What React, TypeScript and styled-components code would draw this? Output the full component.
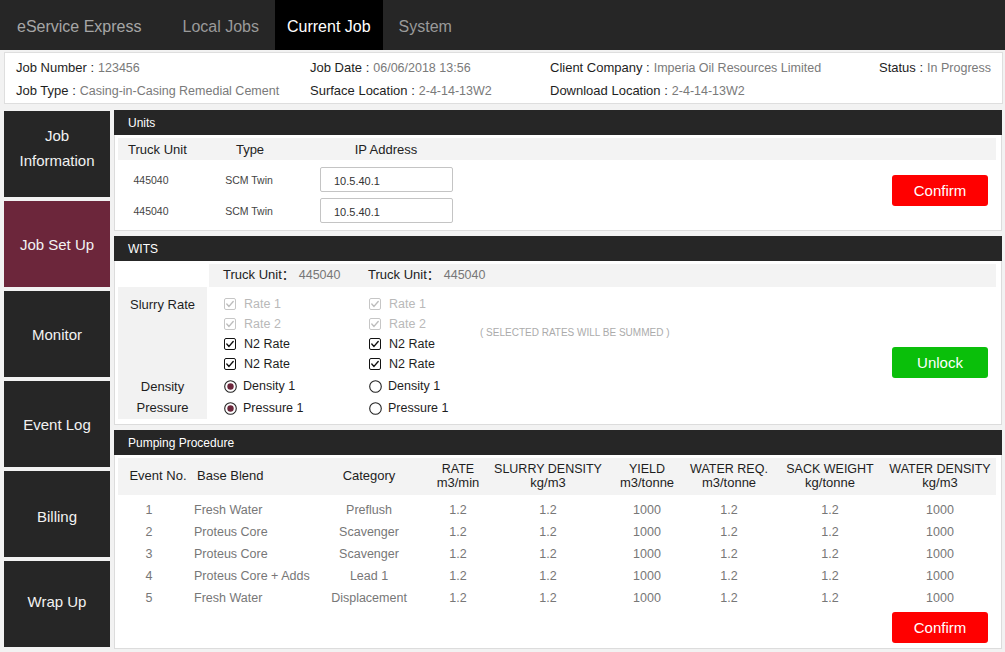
import React from "react";
import styled, { createGlobalStyle } from "styled-components";

const GlobalStyle = createGlobalStyle`
  html, body { margin: 0; padding: 0; background: #f2f2f2; }
  body { font-family: "Liberation Sans", Arial, Helvetica, sans-serif; color: #222; }
  * { box-sizing: border-box; }
`;

const Page = styled.div`
  width: 1005px;
  height: 652px;
  overflow: hidden;
  background: #f2f2f2;
`;

/* ---------- Top bar ---------- */
const TopBar = styled.header`
  height: 50px;
  background: #262626;
  display: flex;
  align-items: stretch;
  padding-left: 17px;
`;
const Brand = styled.div`
  color: #a6a6a6;
  font-size: 16px;
  display: flex;
  align-items: center;
  padding-top: 4px;
  margin-right: 29px;
`;
const NavTabs = styled.nav`
  display: flex;
  gap: 4px;
`;
const NavTab = styled.div<{ $active?: boolean }>`
  display: flex;
  align-items: center;
  padding: 4px 12px 0;
  font-size: 16px;
  color: ${(p) => (p.$active ? "#fff" : "#9a9a9a")};
  background: ${(p) => (p.$active ? "#000" : "transparent")};
`;

/* ---------- Info bar ---------- */
const InfoBar = styled.section`
  margin: 2px 2px 0 4px;
  height: 52px;
  background: #fff;
  border: 1px solid #dedede;
  display: grid;
  grid-template-columns: 294px 240px 329px 1fr;
  grid-template-rows: 23px 23px;
  padding: 3px 0 0 11px;
  font-size: 13px;
`;
const InfoItem = styled.div`
  display: flex;
  align-items: center;
  white-space: nowrap;
`;
const InfoLabel = styled.span`
  color: #1e1e1e;
  margin-right: 4px;
`;
const InfoValue = styled.span`
  color: #7a7a7a;
  font-size: 12.5px;
`;

/* ---------- Main ---------- */
const Main = styled.div`
  display: flex;
  gap: 4px;
  padding: 6px 3px 0 4px;
`;
const Sidebar = styled.aside`
  width: 106px;
  display: flex;
  flex-direction: column;
  gap: 4px;
  padding-top: 1px;
`;
const SideItem = styled.div<{ $active?: boolean; $shift?: number }>`
  height: 86px;
  background: ${(p) => (p.$active ? "#6c263b" : "#262626")};
  color: #f2f2f2;
  font-size: 15px;
  line-height: 25px;
  display: flex;
  align-items: center;
  justify-content: center;
  text-align: center;
  padding-top: ${(p) => Math.max(0, (p.$shift ?? 0) * 2)}px;
  padding-bottom: ${(p) => Math.max(0, -(p.$shift ?? 0) * 2)}px;
`;
const Content = styled.div`
  flex: 1;
  display: flex;
  flex-direction: column;
  gap: 5px;
`;

const Panel = styled.section``;
const PanelHeader = styled.div`
  height: 25px;
  background: #262626;
  color: #fff;
  font-size: 12px;
  display: flex;
  align-items: center;
  padding-left: 14px;
`;
const PanelBody = styled.div<{ $pb?: number }>`
  background: #fff;
  border: 1px solid #dcdcdc;
  border-top: none;
  padding: 3px 5px ${(p) => p.$pb ?? 4}px 3px;
`;

/* ---------- Units ---------- */
const UnitsHead = styled.div`
  display: grid;
  grid-template-columns: 72px 120px 152px 1fr;
  height: 22px;
  background: #f3f3f3;
  font-size: 13px;
  align-items: center;
  text-align: center;
`;
const UnitsHeadFirst = styled.div`
  text-align: left;
  padding-left: 10px;
  white-space: nowrap;
`;
const UnitsContent = styled.div`
  display: flex;
  justify-content: space-between;
  padding-top: 4px;
`;
const UnitRow = styled.div`
  display: grid;
  grid-template-columns: 66px 130px 138px;
  height: 31px;
  align-items: center;
  text-align: center;
  font-size: 10.5px;
  color: #444;
`;
const IpInput = styled.input`
  width: 133px;
  height: 25px;
  border: 1px solid #c4c4c4;
  border-radius: 2px;
  padding: 2px 0 0 13px;
  font-family: inherit;
  font-size: 11px;
  color: #333;
  justify-self: start;
  outline: none;
  margin-left: 6px;
`;
const ActionButton = styled.button<{ $color: string; $top?: number }>`
  width: 96px;
  height: 31px;
  margin: ${(p) => p.$top ?? 0}px 8px 0 0;
  border: none;
  border-radius: 3px;
  background: ${(p) => p.$color};
  color: #fff;
  font-family: inherit;
  font-size: 15px;
  padding: 0;
  flex-shrink: 0;
`;

/* ---------- WITS ---------- */
const WitsTop = styled.div`
  display: flex;
`;
const WitsSpacer = styled.div`
  width: 91px;
`;
const TruckHead = styled.div`
  flex: 1;
  height: 23px;
  background: #f3f3f3;
  display: flex;
  align-items: center;
`;
const TruckCell = styled.div`
  width: 145px;
  padding-left: 14px;
  font-size: 13px;
  line-height: 14px;
  padding-bottom: 2px;
  white-space: nowrap;
  font-family: "Liberation Sans", "Noto Sans CJK SC", sans-serif;
`;
const TruckValue = styled.span`
  color: #777;
  font-size: 12.5px;
  margin-left: 4px;
`;
const WitsMain = styled.div`
  display: flex;
`;
const LabelCol = styled.div`
  width: 89px;
  margin-right: 2px;
  background: #f2f2f2;
  padding-top: 7px;
  display: flex;
  flex-direction: column;
`;
const SideLabel = styled.div<{ $mt?: number }>`
  height: 20px;
  margin-top: ${(p) => p.$mt ?? 0}px;
  display: flex;
  align-items: center;
  justify-content: center;
  font-size: 13px;
  color: #1e1e1e;
`;
const OptionsArea = styled.div`
  flex: 1;
  display: flex;
  align-items: flex-start;
  padding-top: 7px;
`;
const OptionCol = styled.div<{ $w: number }>`
  width: ${(p) => p.$w}px;
  padding-left: 15px;
  display: flex;
  flex-direction: column;
`;
const Option = styled.div<{ $disabled?: boolean; $h?: number; $gap?: number }>`
  height: ${(p) => p.$h ?? 20}px;
  display: flex;
  align-items: center;
  gap: ${(p) => p.$gap ?? 8}px;
  font-size: 12.5px;
  color: ${(p) => (p.$disabled ? "#b9b9b9" : "#1e1e1e")};
  white-space: nowrap;
`;
const NoteCol = styled.div`
  flex: 1;
  padding-top: 33px;
  font-size: 10px;
  line-height: 12px;
  color: #ababab;
  white-space: nowrap;
`;

/* ---------- Pumping ---------- */
const cols = "72px 116px 126px 52px 128px 70px 94px 108px 112px";
const PumpHead = styled.div`
  display: grid;
  grid-template-columns: ${cols};
  height: 37px;
  background: #f3f3f3;
  align-items: center;
  text-align: center;
  font-size: 13px;
  color: #1e1e1e;
  padding-bottom: 2px;
`;
const HeadCell = styled.div<{ $left?: number }>`
  text-align: ${(p) => (p.$left !== undefined ? "left" : "center")};
  padding-left: ${(p) => p.$left ?? 0}px;
  white-space: nowrap;
`;
const HeadTop = styled.div`
  font-size: 12.5px;
  line-height: 14px;
`;
const HeadBottom = styled.div`
  font-size: 13px;
  line-height: 14px;
`;
const PumpRows = styled.div`
  padding-top: 4px;
`;
const PumpRow = styled.div`
  display: grid;
  grid-template-columns: ${cols};
  height: 22px;
  align-items: center;
  font-size: 12.5px;
  color: #777;
`;
const DataCell = styled.div<{ $left?: number }>`
  text-align: ${(p) => (p.$left !== undefined ? "left" : "center")};
  padding-left: ${(p) => p.$left ?? 0}px;
  white-space: nowrap;
`;
const PumpFooter = styled.div`
  display: flex;
  justify-content: flex-end;
  padding-top: 3px;
`;

/* ---------- Icons ---------- */
const CheckBox = ({ disabled }: { disabled?: boolean }) => (
  <svg width="12" height="12" viewBox="0 0 12 12">
    <rect x="0.5" y="0.5" width="11" height="11" rx="1.5" fill="#fff" stroke={disabled ? "#c6c6c6" : "#111"} />
    <path
      d="M2.8 6.1 L5 8.4 L9.2 3.5"
      fill="none"
      stroke={disabled ? "#bdbdbd" : "#111"}
      strokeWidth="1.4"
      strokeLinecap="round"
      strokeLinejoin="round"
    />
  </svg>
);

const Radio = ({ checked }: { checked?: boolean }) => (
  <svg width="13" height="13" viewBox="0 0 13 13">
    <circle cx="6.5" cy="6.5" r="5.8" fill="#fff" stroke="#222" strokeWidth="1.1" />
    {checked && <circle cx="6.5" cy="6.5" r="3.2" fill="#6c263b" />}
  </svg>
);

const pumpData = [
  ["1", "Fresh Water", "Preflush"],
  ["2", "Proteus Core", "Scavenger"],
  ["3", "Proteus Core", "Scavenger"],
  ["4", "Proteus Core + Adds", "Lead 1"],
  ["5", "Fresh Water", "Displacement"],
];

const sideItems: { label: string; shift: number }[] = [
  { label: "Job\nInformation", shift: -6 },
  { label: "Job Set Up", shift: 0 },
  { label: "Monitor", shift: 0 },
  { label: "Event Log", shift: 0 },
  { label: "Billing", shift: 2 },
  { label: "Wrap Up", shift: -3 },
];

const WitsColumn = ({ w, radiosChecked }: { w: number; radiosChecked: boolean }) => (
  <OptionCol $w={w}>
    <Option $disabled>
      <CheckBox disabled />
      Rate 1
    </Option>
    <Option $disabled>
      <CheckBox disabled />
      Rate 2
    </Option>
    <Option>
      <CheckBox />
      N2 Rate
    </Option>
    <Option>
      <CheckBox />
      N2 Rate
    </Option>
    <Option $h={22} $gap={6} style={{ marginTop: 1 }}>
      <Radio checked={radiosChecked} />
      Density 1
    </Option>
    <Option $h={22} $gap={6}>
      <Radio checked={radiosChecked} />
      Pressure 1
    </Option>
  </OptionCol>
);

export default function App() {
  return (
    <Page>
      <GlobalStyle />
      <TopBar>
        <Brand>eService Express</Brand>
        <NavTabs>
          <NavTab>Local Jobs</NavTab>
          <NavTab $active>Current Job</NavTab>
          <NavTab>System</NavTab>
        </NavTabs>
      </TopBar>

      <InfoBar>
        <InfoItem>
          <InfoLabel>Job Number :</InfoLabel>
          <InfoValue>123456</InfoValue>
        </InfoItem>
        <InfoItem>
          <InfoLabel>Job Date :</InfoLabel>
          <InfoValue>06/06/2018 13:56</InfoValue>
        </InfoItem>
        <InfoItem>
          <InfoLabel>Client Company :</InfoLabel>
          <InfoValue>Imperia Oil Resources Limited</InfoValue>
        </InfoItem>
        <InfoItem>
          <InfoLabel>Status :</InfoLabel>
          <InfoValue>In Progress</InfoValue>
        </InfoItem>
        <InfoItem>
          <InfoLabel>Job Type :</InfoLabel>
          <InfoValue>Casing-in-Casing Remedial Cement</InfoValue>
        </InfoItem>
        <InfoItem>
          <InfoLabel>Surface Location :</InfoLabel>
          <InfoValue>2-4-14-13W2</InfoValue>
        </InfoItem>
        <InfoItem>
          <InfoLabel>Download Location :</InfoLabel>
          <InfoValue>2-4-14-13W2</InfoValue>
        </InfoItem>
        <InfoItem />
      </InfoBar>

      <Main>
        <Sidebar>
          {sideItems.map((s, i) => (
            <SideItem key={s.label} $active={i === 1} $shift={s.shift}>
              <div>
                {s.label.split("\n").map((line) => (
                  <div key={line}>{line}</div>
                ))}
              </div>
            </SideItem>
          ))}
        </Sidebar>

        <Content>
          <Panel>
            <PanelHeader>Units</PanelHeader>
            <PanelBody>
              <UnitsHead>
                <UnitsHeadFirst>Truck Unit</UnitsHeadFirst>
                <div>Type</div>
                <div>IP Address</div>
                <div />
              </UnitsHead>
              <UnitsContent>
                <div>
                  {[0, 1].map((i) => (
                    <UnitRow key={i}>
                      <div>445040</div>
                      <div>SCM Twin</div>
                      <IpInput readOnly value="10.5.40.1" />
                    </UnitRow>
                  ))}
                </div>
                <ActionButton $color="#ff0000" $top={11}>
                  Confirm
                </ActionButton>
              </UnitsContent>
            </PanelBody>
          </Panel>

          <Panel>
            <PanelHeader>WITS</PanelHeader>
            <PanelBody $pb={5}>
              <WitsTop>
                <WitsSpacer />
                <TruckHead>
                  <TruckCell>
                    Truck Unit：<TruckValue>445040</TruckValue>
                  </TruckCell>
                  <TruckCell>
                    Truck Unit：<TruckValue>445040</TruckValue>
                  </TruckCell>
                </TruckHead>
              </WitsTop>
              <WitsMain>
                <LabelCol>
                  <SideLabel>Slurry Rate</SideLabel>
                  <SideLabel $mt={62}>Density</SideLabel>
                  <SideLabel $mt={1}>Pressure</SideLabel>
                </LabelCol>
                <OptionsArea>
                  <WitsColumn w={145} radiosChecked />
                  <WitsColumn w={126} radiosChecked={false} />
                  <NoteCol>( SELECTED RATES WILL BE SUMMED )</NoteCol>
                  <ActionButton $color="#0abf0a" $top={53}>
                    Unlock
                  </ActionButton>
                </OptionsArea>
              </WitsMain>
            </PanelBody>
          </Panel>

          <Panel>
            <PanelHeader>Pumping Procedure</PanelHeader>
            <PanelBody $pb={5}>
              <PumpHead>
                <HeadCell style={{ paddingLeft: 8 }}>Event No.</HeadCell>
                <HeadCell $left={7}>Base Blend</HeadCell>
                <HeadCell>Category</HeadCell>
                <HeadCell>
                  <HeadTop>RATE</HeadTop>
                  <HeadBottom>m3/min</HeadBottom>
                </HeadCell>
                <HeadCell>
                  <HeadTop>SLURRY DENSITY</HeadTop>
                  <HeadBottom>kg/m3</HeadBottom>
                </HeadCell>
                <HeadCell>
                  <HeadTop>YIELD</HeadTop>
                  <HeadBottom>m3/tonne</HeadBottom>
                </HeadCell>
                <HeadCell>
                  <HeadTop>WATER REQ.</HeadTop>
                  <HeadBottom>m3/tonne</HeadBottom>
                </HeadCell>
                <HeadCell>
                  <HeadTop>SACK WEIGHT</HeadTop>
                  <HeadBottom>kg/tonne</HeadBottom>
                </HeadCell>
                <HeadCell>
                  <HeadTop>WATER DENSITY</HeadTop>
                  <HeadBottom>kg/m3</HeadBottom>
                </HeadCell>
              </PumpHead>
              <PumpRows>
                {pumpData.map(([n, blend, cat]) => (
                  <PumpRow key={n}>
                    <DataCell style={{ paddingRight: 10 }}>{n}</DataCell>
                    <DataCell $left={4}>{blend}</DataCell>
                    <DataCell>{cat}</DataCell>
                    <DataCell>1.2</DataCell>
                    <DataCell>1.2</DataCell>
                    <DataCell>1000</DataCell>
                    <DataCell>1.2</DataCell>
                    <DataCell>1.2</DataCell>
                    <DataCell>1000</DataCell>
                  </PumpRow>
                ))}
              </PumpRows>
              <PumpFooter>
                <ActionButton $color="#ff0000">Confirm</ActionButton>
              </PumpFooter>
            </PanelBody>
          </Panel>
        </Content>
      </Main>
    </Page>
  );
}
